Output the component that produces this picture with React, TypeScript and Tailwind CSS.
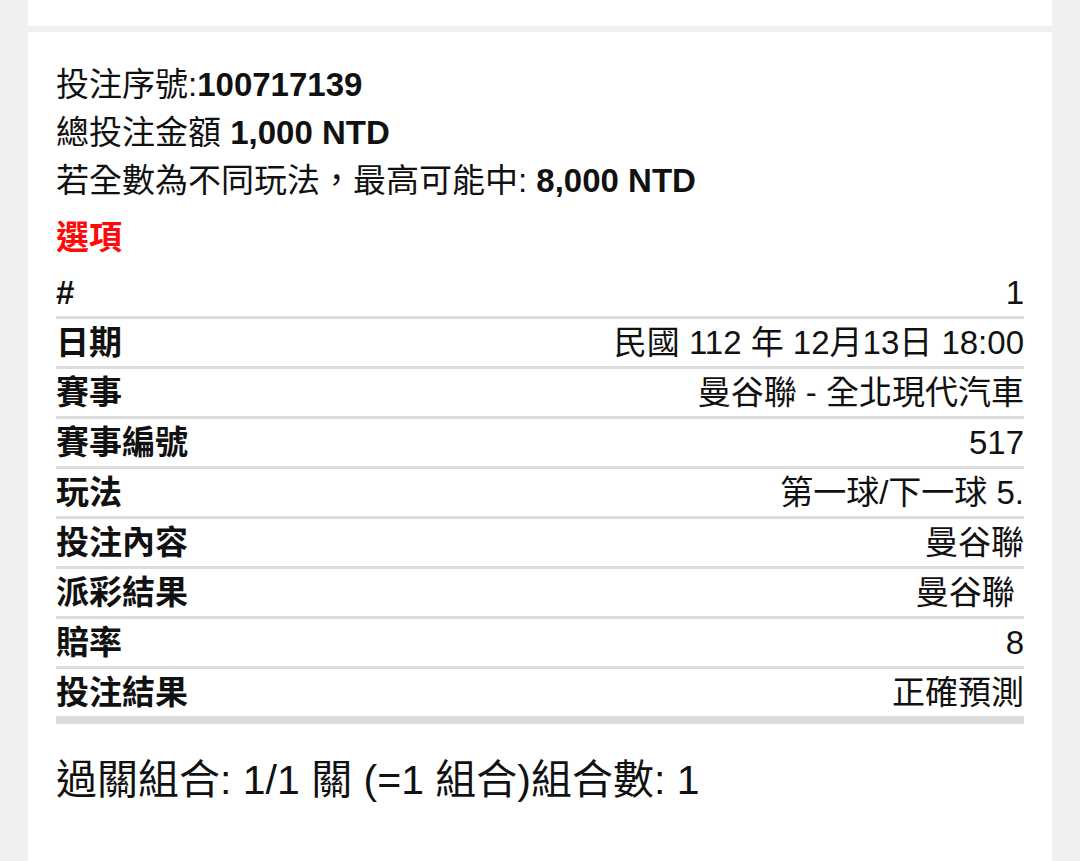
const rows: [string, string][] = [
  ['#', '1'],
  ['日期', '民國 112 年 12月13日 18:00'],
  ['賽事', '曼谷聯 - 全北現代汽車'],
  ['賽事編號', '517'],
  ['玩法', '第一球/下一球 5.'],
  ['投注內容', '曼谷聯'],
  ['派彩結果', '曼谷聯 '],
  ['賠率', '8'],
  ['投注結果', '正確預測'],
]

export default function App() {
  return (
    <div
      className="h-[861px] overflow-hidden bg-[#efefef] text-[#111]"
      style={{ fontFamily: '"Liberation Sans", "Noto Sans CJK TC", sans-serif' }}
    >
      {/* previous ticket, cut off at top */}
      <div className="mx-[28px] h-[26px] bg-white" />

      <div className="mx-[28px] mt-[6px] h-[900px] bg-white px-[28px] pt-[29px]">
        <div className="text-[33px] leading-[48px]">
          <div>
            投注序號:<span className="font-bold">100717139</span>
          </div>
          <div>
            總投注金額 <span className="font-bold">1,000 NTD</span>
          </div>
          <div>
            若全數為不同玩法，最高可能中: <span className="font-bold">8,000 NTD</span>
          </div>
          <div className="mt-[9px] font-bold text-[#ff0a0a]">選項</div>
        </div>

        <div className="mt-[7px] text-[33px] leading-[47px]">
          {rows.map(([label, value], i) => (
            <div
              key={label}
              className={
                i === rows.length - 1
                  ? 'flex justify-between border-b-[8px] border-[#dcdcdc]'
                  : 'flex justify-between border-b-[3px] border-[#dcdcdc]'
              }
            >
              <span className="font-bold">{label}</span>
              <span className="whitespace-pre">{value}</span>
            </div>
          ))}
        </div>

        <div className="mt-[32px] text-[41px] leading-[48px]">
          過關組合: 1/1 關 (=1 組合)組合數: 1
        </div>
      </div>
    </div>
  )
}
